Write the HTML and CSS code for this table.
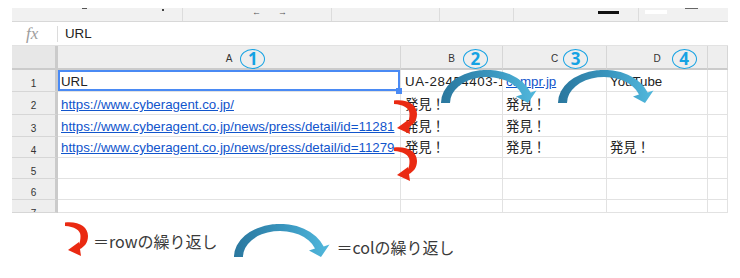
FILE: index.html
```html
<!DOCTYPE html>
<html lang="ja">
<head>
<meta charset="utf-8">
<title>Sheet</title>
<link rel="stylesheet" href="styles.css">
</head>
<body>
<div class="sheet">
  <div class="toolbar">
    <div class="tb-seg s1"><span class="ic dash"></span><span class="ic dot"></span></div>
    <div class="tb-seg s2"><span class="arr al">←</span><span class="arr ar">→</span></div>
    <div class="tb-seg s3"></div>
    <div class="tb-seg s4"></div>
    <div class="tb-seg s5"><span class="ic blackbar"></span></div>
    <div class="tb-seg s6"><span class="ic whitebar"></span><span class="ic graydash"></span></div>
  </div>
  <div class="formula"><span class="fx">fx</span><span class="fsep"></span><span class="fval">URL</span></div>
  <div class="grid-wrap">
    <div class="grid">
      <div class="corner"></div>
      <div class="colh"><span class="lbl">A<span class="num n1">1</span></span></div>
      <div class="colh"><span class="lbl">B<span class="num n2">2</span></span></div>
      <div class="colh"><span class="lbl">C<span class="num n3">3</span></span></div>
      <div class="colh"><span class="lbl">D<span class="num n4">4</span></span></div>
      <div class="colh"></div>

      <div class="rowh">1</div>
      <div class="cell sel">URL<span class="handle"></span></div>
      <div class="cell cb ua">UA-28454403-1</div>
      <div class="cell"><span class="link">campr.jp</span></div>
      <div class="cell">YouTube</div>
      <div class="cell"></div>

      <div class="rowh">2</div>
      <div class="cell"><span class="link">https://www.cyberagent.co.jp/</span></div>
      <div class="cell cb">発見！</div>
      <div class="cell">発見！</div>
      <div class="cell"></div>
      <div class="cell"></div>

      <div class="rowh">3</div>
      <div class="cell"><span class="link">https://www.cyberagent.co.jp/news/press/detail/id=11281</span></div>
      <div class="cell cb">発見！</div>
      <div class="cell">発見！</div>
      <div class="cell"></div>
      <div class="cell"></div>

      <div class="rowh">4</div>
      <div class="cell"><span class="link">https://www.cyberagent.co.jp/news/press/detail/id=11279</span></div>
      <div class="cell cb">発見！</div>
      <div class="cell">発見！</div>
      <div class="cell">発見！</div>
      <div class="cell"></div>

      <div class="rowh">5</div>
      <div class="cell"></div><div class="cell"></div><div class="cell"></div><div class="cell"></div><div class="cell"></div>

      <div class="rowh">6</div>
      <div class="cell"></div><div class="cell"></div><div class="cell"></div><div class="cell"></div><div class="cell"></div>

      <div class="rowh">7</div>
      <div class="cell"></div><div class="cell"></div><div class="cell"></div><div class="cell"></div><div class="cell"></div>
    </div>

    <svg class="ov red r1" width="24" height="35" viewBox="0 0 24 35"><path d="M0,0.5 C14,-1 23,5 23,14 C23,21 19,25 15,27 L16,34 L3,28 L14,20 L14,22 C15,20 15.5,17 15.5,14 C15.5,8 9,4.5 0,4 Z"/></svg>
    <svg class="ov red r2" width="24" height="35" viewBox="0 0 24 35"><path d="M0,0.5 C14,-1 23,5 23,14 C23,21 19,25 15,27 L16,34 L3,28 L14,20 L14,22 C15,20 15.5,17 15.5,14 C15.5,8 9,4.5 0,4 Z"/></svg>
    <svg class="ov blue b1" width="96" height="35" viewBox="0 0 96 35"><defs><linearGradient id="g1" x1="0" y1="0" x2="96" y2="0" gradientUnits="userSpaceOnUse"><stop offset="0" stop-color="#2a779e"/><stop offset="0.55" stop-color="#3a97c0"/><stop offset="1" stop-color="#52b9dd"/></linearGradient></defs><path fill="url(#g1)" d="M0,33 A46,33 0 0,1 89.7,22.6 L95.5,20.5 L87,33 L75,26.5 L81,24.5 A37,26 0 0,0 9,33 Z"/></svg>
    <svg class="ov blue b2" width="96" height="35" viewBox="0 0 96 35"><defs><linearGradient id="g2" x1="0" y1="0" x2="96" y2="0" gradientUnits="userSpaceOnUse"><stop offset="0" stop-color="#2a779e"/><stop offset="0.55" stop-color="#3a97c0"/><stop offset="1" stop-color="#52b9dd"/></linearGradient></defs><path fill="url(#g2)" d="M0,33 A46,33 0 0,1 89.7,22.6 L95.5,20.5 L87,33 L75,26.5 L81,24.5 A37,26 0 0,0 9,33 Z"/></svg>
  </div>
</div>

<div class="legend">
  <svg class="lg-red" width="24" height="35" viewBox="0 0 24 35"><path d="M0,0.5 C14,-1 23,5 23,14 C23,21 19,25 15,27 L16,34 L3,28 L14,20 L14,22 C15,20 15.5,17 15.5,14 C15.5,8 9,4.5 0,4 Z"/></svg>
  <span class="lg-text t1">＝rowの繰り返し</span>
  <svg class="lg-blue" width="96" height="35" viewBox="0 0 96 35"><defs><linearGradient id="g3" x1="0" y1="0" x2="96" y2="0" gradientUnits="userSpaceOnUse"><stop offset="0" stop-color="#2a779e"/><stop offset="0.55" stop-color="#3a97c0"/><stop offset="1" stop-color="#52b9dd"/></linearGradient></defs><path fill="url(#g3)" d="M0,33 A46,33 0 0,1 89.7,22.6 L95.5,20.5 L87,33 L75,26.5 L81,24.5 A37,26 0 0,0 9,33 Z"/></svg>
  <span class="lg-text t2">＝colの繰り返し</span>
</div>
</body>
</html>
```

FILE: styles.css
```css
html, body {
  margin: 0;
  padding: 0;
  background: #ffffff;
}
body {
  width: 740px;
  height: 278px;
  overflow: hidden;
  font-family: "Liberation Sans", Arial, "Noto Sans CJK JP", sans-serif;
  color: #222;
}

.sheet {
  margin: 8px 0 0 12px;
  width: 716px;
}

/* toolbar strip (cut off at top) */
.toolbar {
  display: flex;
  height: 13px;
  background: #f1f1f1;
  border-bottom: 1px solid #d8d8d8;
}
.tb-seg {
  display: flex;
  align-items: flex-start;
  height: 13px;
  box-sizing: border-box;
}
.tb-seg + .tb-seg { border-left: 1px solid #dcdcdc; }
.s1 { width: 170px; }
.s2 { width: 149px; }
.s3 { width: 108px; }
.s4 { width: 74px; }
.s5 { width: 125px; }
.s6 { width: 90px; }
.ic { display: block; }
.dash { margin-left: 70px; width: 5px; height: 1px; background: #555; }
.dot { margin-left: 75px; margin-top: 1px; width: 2px; height: 2px; background: #444; }
.arr { font-size: 9px; line-height: 6px; color: #555; margin-top: 1px; }
.al { margin-left: 69px; }
.ar { margin-left: 17px; }
.blackbar { margin-left: 84px; margin-top: 3px; width: 21px; height: 3px; background: #111; }
.whitebar { margin-left: 6px; margin-top: 2px; width: 22px; height: 4px; background: #fff; }
.graydash { margin-left: 18px; width: 13px; height: 1px; background: #666; }

/* formula bar */
.formula {
  display: flex;
  align-items: center;
  height: 23px;
  border-bottom: 1px solid #e2e2e2;
  background: #fff;
}
.fx {
  margin-left: 14px;
  width: 16px;
  font-family: "Liberation Serif", serif;
  font-style: italic;
  font-size: 17px;
  color: #9d9d9d;
}
.fsep { margin-left: 15px; width: 1px; height: 16px; background: #dcdcdc; }
.fval { margin-left: 7px; font-size: 13.3px; color: #222; }

/* grid */
.grid-wrap { position: relative; }
.grid {
  display: grid;
  grid-template-columns: 46px 343px 102px 104px 101px 20px;
  grid-template-rows: 24px 22px 23px 22px 21px 21px 21px 13px;
}
.grid > div {
  box-sizing: border-box;
  overflow: hidden;
}
.corner {
  background: #e7e7e7;
  border-right: 3px solid #cbcbcb;
  border-bottom: 2px solid #cbcbcb;
}
.colh {
  background: #eeeeee;
  border-right: 1px solid #d6d6d6;
  border-bottom: 2px solid #cbcbcb;
  display: flex;
  justify-content: center;
  align-items: flex-start;
  padding-top: 8px;
  overflow: visible !important;
}
.lbl {
  position: relative;
  font-size: 10px;
  line-height: 10px;
  color: #333;
}
.num {
  position: absolute;
  top: -5px;
  width: 25px;
  height: 20px;
  box-sizing: border-box;
  border: 1.6px solid #15a2e3;
  border-radius: 50%;
  color: #15a2e3;
  font-family: "Noto Sans", "Liberation Sans", sans-serif;
  font-weight: 700;
  font-size: 17px;
  line-height: 17px;
  text-align: center;
}
.n1 { left: calc(100% + 8px); }
.n2 { left: calc(100% + 8px); }
.n3 { left: calc(100% + 5px); }
.n4 { left: calc(100% + 11px); }

.rowh {
  background: #eeeeee;
  border-right: 3px solid #cbcbcb;
  border-bottom: 1px solid #d6d6d6;
  display: flex;
  justify-content: center;
  align-items: flex-start;
  padding-top: 9px;
  font-size: 10px;
  line-height: 10px;
  color: #333;
}
.cell {
  position: relative;
  border-right: 1px solid #e2e2e2;
  border-bottom: 1px solid #e2e2e2;
  display: flex;
  align-items: flex-end;
  padding: 0 3px 1px 3px;
  font-size: 13.3px;
  line-height: 16px;
  white-space: nowrap;
  color: #222;
}
.cb { padding-left: 4px; }
.ua { letter-spacing: 0.55px; }
.link { color: #1155cc; text-decoration: underline; }
.sel {
  overflow: visible !important;
  box-shadow: inset 0 0 0 2px #4a8af4;
}
.handle {
  position: absolute;
  right: -2px;
  bottom: -3px;
  width: 6px;
  height: 6px;
  background: #4a8af4;
  z-index: 2;
}

/* overlay arrows */
.ov { position: absolute; z-index: 3; }
.red path, .lg-red path { fill: #ea2a12; }
.r1 { left: 382px; top: 54px; }
.r2 { left: 382px; top: 101px; }
.b1 { left: 429px; top: 24px; }
.b2 { left: 546px; top: 24px; }

/* legend */
.legend {
  display: flex;
  align-items: flex-start;
  margin-top: 9px;
  padding-left: 65px;
}
.lg-text {
  font-family: "Noto Sans CJK JP", sans-serif;
  font-size: 16px;
  line-height: 20px;
  color: #3a3a3a;
  white-space: nowrap;
}
.t1 { margin-left: 4px; margin-top: 9px; }
.lg-blue { margin-left: 16px; margin-top: 2px; }
.t2 { margin-left: 7px; margin-top: 15px; }
```
